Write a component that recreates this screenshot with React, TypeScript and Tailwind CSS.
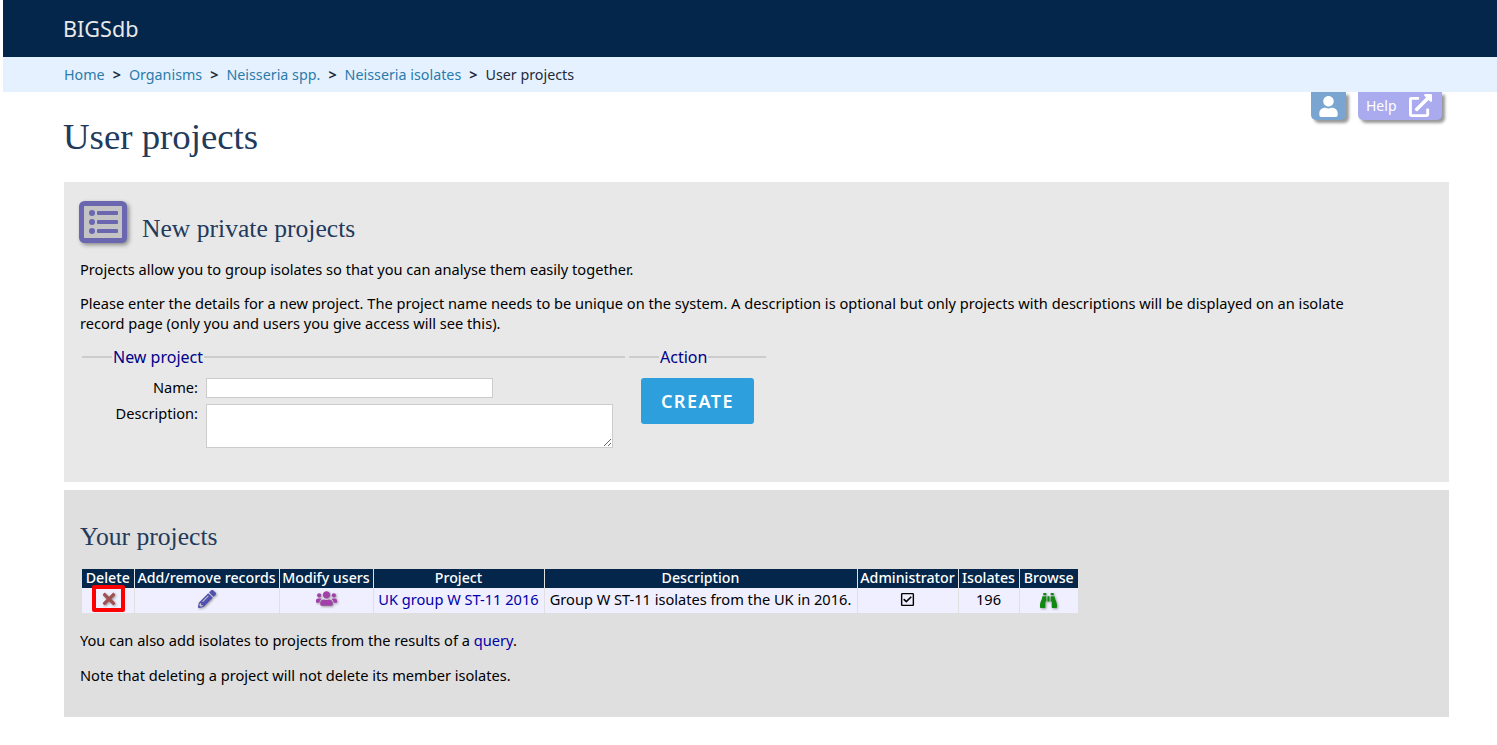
import { FaUser, FaExternalLinkAlt, FaTimes, FaPencilAlt, FaUsers, FaRegCheckSquare, FaBinoculars } from "react-icons/fa";

const sans = "font-['Noto_Sans','Open_Sans',sans-serif]";
const serif = "font-['Liberation_Serif',serif]";

function ListIcon() {
  return (
    <svg width="52" height="46" viewBox="0 0 52 46" className="-ml-px shrink-0 drop-shadow-[2px_2px_2px_#888]">
      <rect x="2.5" y="2.5" width="43" height="37" rx="3" fill="#c4c4c4" stroke="#6a67b0" strokeWidth="5" />
      <circle cx="13" cy="12" r="3" fill="#6a67b0" />
      <circle cx="13" cy="21" r="3" fill="#6a67b0" />
      <circle cx="13" cy="30" r="3" fill="#6a67b0" />
      <rect x="18" y="10" width="21" height="4" rx="1" fill="#6a67b0" />
      <rect x="18" y="19" width="21" height="4" rx="1" fill="#6a67b0" />
      <rect x="18" y="28" width="21" height="4" rx="1" fill="#6a67b0" />
    </svg>
  );
}

function Legend({ title }: { title: string }) {
  return (
    <div className="flex items-center text-[16px] leading-5 text-[#000088]">
      <span className="h-[2px] w-[30px] bg-[#cccccc]" />
      <span className="px-px">{title}</span>
      <span className="h-[2px] flex-1 bg-[#cccccc]" />
    </div>
  );
}

const Th = ({ children, className }: { children: string; className: string }) => (
  <th className={`border-r border-[#e0e0e0] p-0 pb-px text-center font-medium last:border-r-0 ${className}`}>{children}</th>
);

const Td = ({ children, className = "" }: { children: React.ReactNode; className?: string }) => (
  <td className={`border-r border-[#e0e0e0] p-0 text-center last:border-r-0 ${className}`}>{children}</td>
);

export default function App() {
  return (
    <div className={`relative min-h-[745px] pl-[3px] text-[14.6px] text-black ${sans}`}>
      <header className="flex h-[57px] items-center bg-[#03264a] pl-[60px] pt-px text-[21.6px] text-[#e8e8e8]">BIGSdb</header>
      <nav className="flex h-[35px] items-center gap-[8px] bg-[#e5f1ff] pl-[61px] text-[14.3px] text-[#1f2a3a]">
        <a className="text-[#2b7bab]">Home</a>
        <b>&gt;</b>
        <a className="text-[#2b7bab]">Organisms</a>
        <b>&gt;</b>
        <a className="text-[#2b7bab]">Neisseria spp.</a>
        <b>&gt;</b>
        <a className="text-[#2b7bab]">Neisseria isolates</a>
        <b>&gt;</b>
        <span>User projects</span>
      </nav>

      <div className="absolute right-[55px] top-[92px] flex gap-[12px] text-white">
        <div className="flex h-[28px] w-[35px] items-center justify-center rounded-b-[5px] bg-[#7ba5d1] text-[21px] shadow-[3px_3px_3px_#999]">
          <FaUser />
        </div>
        <div className="flex h-[28px] w-[84px] items-center justify-between rounded-b-[5px] bg-[#aaaaee] pb-[2px] pl-2 pr-[10px] text-[14px] shadow-[3px_3px_3px_#999]">
          <span>Help</span>
          <FaExternalLinkAlt className="text-[23px]" />
        </div>
      </div>

      <main className="pl-[60px] pr-[48px]">
        <h1 className={`pb-[25px] pt-[24px] text-[36.8px] leading-[41px] text-[#223a5c] ${serif}`}>User projects</h1>

        <section className="ml-px h-[300px] bg-[#e8e8e8] px-4 pt-[19px]">
          <div className="flex items-end gap-[11px]">
            <ListIcon />
            <h2 className={`pb-[3px] text-[25.6px] leading-[30px] text-[#223a5c] ${serif}`}>New private projects</h2>
          </div>
          <p className="mt-[12px] leading-5">Projects allow you to group isolates so that you can analyse them easily together.</p>
          <p className="mt-[14px] w-[1290px] leading-5">
            Please enter the details for a new project. The project name needs to be unique on the system. A description is optional but only projects with descriptions will be displayed on an isolate record page (only you and users you give access will see this).
          </p>
          <div className="mt-[14px] flex gap-[4px] pl-[2px]">
            <div className="w-[543px]">
              <Legend title="New project" />
              <div className="mt-[11px] grid grid-cols-[116px_1fr] items-start gap-x-[8px] gap-y-[6px] pr-[12px]">
                <label className="text-right leading-[18px]">Name:</label>
                <input className="h-[20px] w-[287px] border border-[#cccccc] bg-white" />
                <label className="text-right leading-[18px]">Description:</label>
                <textarea className="block h-[44px] w-[407px] border border-[#cccccc] bg-white" />
              </div>
            </div>
            <div className="w-[137px]">
              <Legend title="Action" />
              <button className="ml-[12px] mt-[11px] h-[46px] w-[113px] rounded-[3px] bg-[#2d9fdd] text-[18px] font-semibold tracking-[1.5px] text-white">CREATE</button>
            </div>
          </div>
        </section>

        <section className="ml-px mt-[8px] h-[227px] bg-[#dfdfdf] px-4 pt-[32px]">
          <h2 className={`text-[25.6px] leading-[30px] text-[#223a5c] ${serif}`}>Your projects</h2>
          <table className="ml-[2px] mt-[17px] w-[996px] table-fixed border-collapse leading-[18px]">
            <thead className="bg-[#03264a] text-[14.2px] text-white">
              <tr className="h-[19px]">
                <Th className="w-[52px]">Delete</Th>
                <Th className="w-[145px]">Add/remove records</Th>
                <Th className="w-[94px]">Modify users</Th>
                <Th className="w-[171px]">Project</Th>
                <Th className="w-[313px]">Description</Th>
                <Th className="w-[101px]">Administrator</Th>
                <Th className="w-[61px]">Isolates</Th>
                <Th className="w-[59px]">Browse</Th>
              </tr>
            </thead>
            <tbody className="bg-[#efefff]">
              <tr className="h-[25px]">
                <Td>
                  <span className="relative left-px mx-auto -mt-[4px] flex h-[27px] w-[33px] items-center justify-center rounded-[2px] border-4 border-[#ff0000] text-[18px] text-[#a05050]">
                    <FaTimes className="drop-shadow-[1px_1px_1px_#999]" />
                  </span>
                </Td>
                <Td className="pb-[3px]"><FaPencilAlt className="mx-auto text-[18px] text-[#5050b0] drop-shadow-[1px_1px_1px_#999]" /></Td>
                <Td className="pb-[4px]"><FaUsers className="mx-auto text-[21px] text-[#a040a8] drop-shadow-[1px_1px_1px_#999]" /></Td>
                <Td className="pb-[3px] text-[#0000aa]">UK group W ST-11 2016</Td>
                <Td className="pb-[3px]">Group W ST-11 isolates from the UK in 2016.</Td>
                <Td className="pb-[3px]"><FaRegCheckSquare className="mx-auto text-[15px]" /></Td>
                <Td className="pb-[3px]">196</Td>
                <Td><FaBinoculars className="mx-auto text-[17px] text-[#118811] drop-shadow-[1px_1px_1px_#999]" /></Td>
              </tr>
            </tbody>
          </table>
          <p className="mt-[17px] leading-5">You can also add isolates to projects from the results of a <a className="text-[#0000aa]">query</a>.</p>
          <p className="mt-[15px] leading-5">Note that deleting a project will not delete its member isolates.</p>
        </section>
      </main>
    </div>
  );
}
